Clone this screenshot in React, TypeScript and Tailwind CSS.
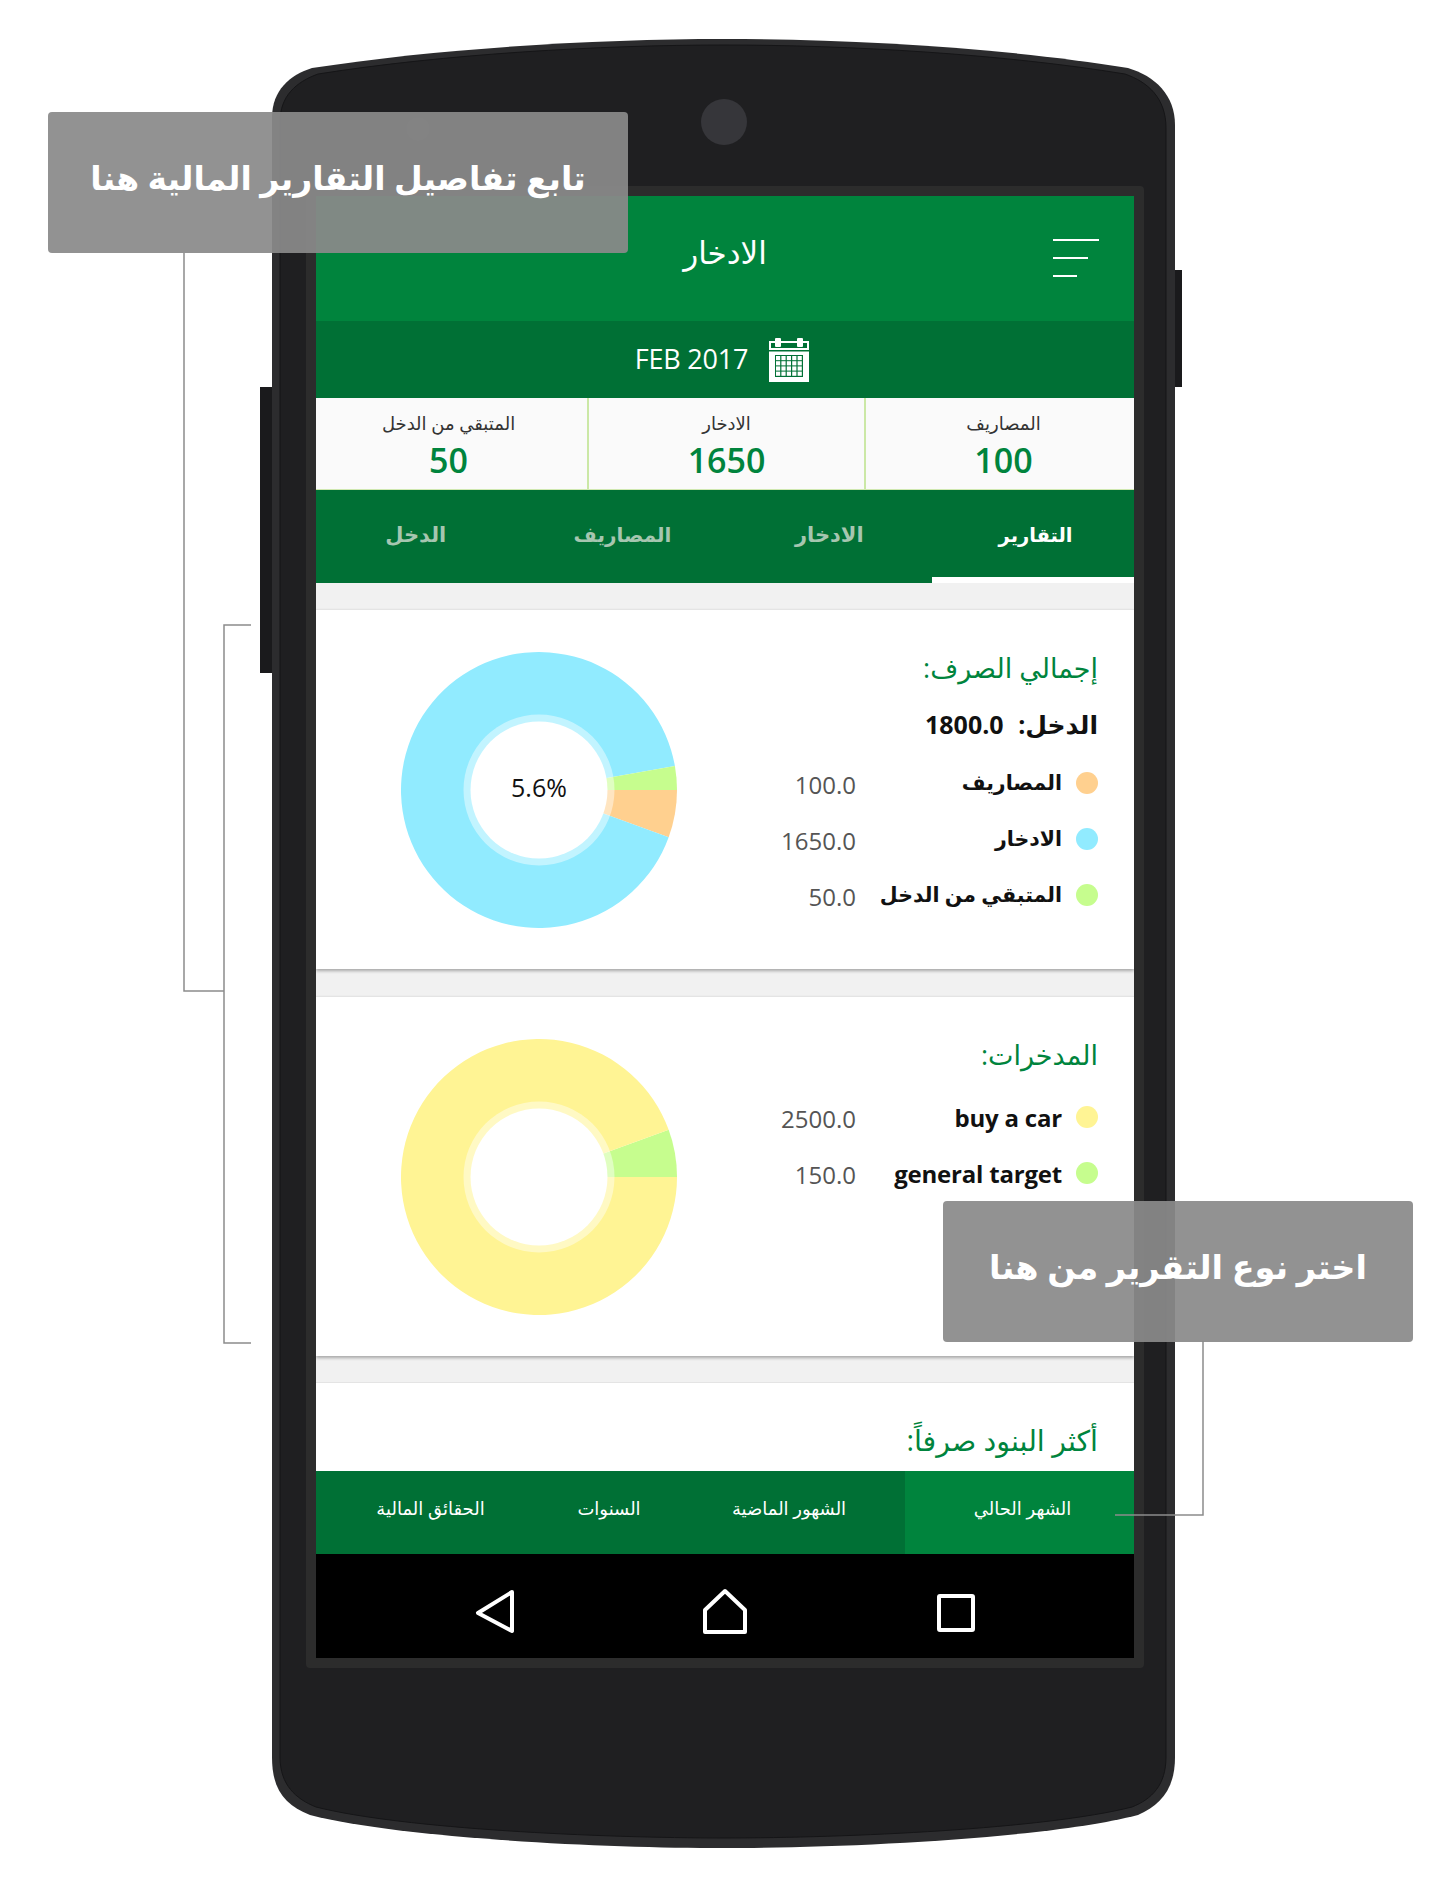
const TABS = [
  { label: 'التقارير', className: 'font-bold text-white text-[19.5px] border-b-[6px] border-white pl-[5px]' },
  { label: 'الادخار', className: 'font-bold text-[#a6c6b0] text-[21px] mb-[6px]' },
  { label: 'المصاريف', className: 'font-bold text-[#a6c6b0] text-[20px] mb-[6px] pr-[3px]' },
  { label: 'الدخل', className: 'font-bold text-[#a6c6b0] text-[21px] mb-[6px] pr-[6px]' },
];

const STATS = [
  { label: 'المصاريف', value: '100', className: 'w-[270px] pl-[7px] border-l-2' },
  { label: 'الادخار', value: '1650', className: 'w-[277px] border-l-2' },
  { label: 'المتبقي من الدخل', value: '50', className: 'flex-1 pr-[6px]' },
];

const PERIODS = [
  { label: 'الشهر الحالي', className: 'w-[229px] bg-[#00843d] pl-[6px]' },
  { label: 'الشهور الماضية', className: 'w-[232px]' },
  { label: 'السنوات', className: 'w-[128px]' },
  { label: 'الحقائق المالية', className: 'flex-1' },
];

type Slice = { from: number; to: number; color: string };

function arc(from: number, to: number) {
  const r = 138;
  const rad = (d: number) => (d * Math.PI) / 180;
  const x1 = 138 + r * Math.cos(rad(from));
  const y1 = 138 + r * Math.sin(rad(from));
  const x2 = 138 + r * Math.cos(rad(to));
  const y2 = 138 + r * Math.sin(rad(to));
  return `M138 138L${x1} ${y1}A${r} ${r} 0 ${to - from > 180 ? 1 : 0} 1 ${x2} ${y2}Z`;
}

function Donut({ slices, label }: { slices: Slice[]; label?: string }) {
  return (
    <div className="relative w-[276px] h-[276px]">
      <svg width="276" height="276" viewBox="0 0 276 276">
        {slices.map((s) => (
          <path key={s.from} d={arc(s.from, s.to)} fill={s.color} />
        ))}
        <circle cx="138" cy="138" r="75.5" fill="#fff" fillOpacity="0.45" />
        <circle cx="138" cy="138" r="68.5" fill="#fff" />
      </svg>
      {label && (
        <div className="absolute inset-0 flex items-center justify-center pb-[4px] text-[25px] text-[#111]">
          {label}
        </div>
      )}
    </div>
  );
}

function LegendRow({ dot, label, value, latin }: { dot: string; label: string; value: string; latin?: boolean }) {
  return (
    <div className="flex items-center h-[56px]" dir="rtl">
      <span className={`w-[22px] h-[22px] rounded-full ${dot}`} />
      <span
        className={`w-[206px] mr-[14px] font-bold text-[#111] leading-none ${
          latin ? 'text-[24px] tracking-[-0.2px] mt-[2px]' : 'text-[20.5px] mb-[2px]'
        }`}
      >
        {label}
      </span>
      <span className="text-[24px] text-[#555] leading-none mt-[4px]">{value}</span>
    </div>
  );
}

function Card({ children }: { children: React.ReactNode }) {
  return (
    <div className="relative h-[360px] bg-white border-t border-[#e4e4e4] shadow-[0_2px_3px_rgba(0,0,0,0.3)] flex justify-between pl-[85px] pr-[36px] pt-[42px]">
      {children}
    </div>
  );
}

function Title({ children, size }: { children: React.ReactNode; size: string }) {
  return (
    <div className={`h-[36px] leading-[31px] text-[#00843d] ${size}`} dir="rtl">
      {children}
    </div>
  );
}

function PhoneShell() {
  return (
    <svg className="absolute left-0 top-0" width="1440" height="1877" viewBox="0 0 1440 1877">
      <rect x="260" y="387" width="14" height="286" fill="#1a1a1c" />
      <rect x="1172" y="270" width="10" height="117" fill="#1a1a1c" />
      <path
        d="M272 118C272 90 290 75 312 68C440 48 600 39 724 39C848 39 1008 48 1128 68C1155 76 1175 95 1175 125L1175 1757C1175 1790 1160 1805 1138 1815C1050 1838 848 1848 724 1848C600 1848 400 1838 310 1815C285 1805 272 1790 272 1757Z"
        fill="#2c2c2e"
      />
      <path
        d="M280 122C280 96 296 82 318 74C445 54 600 45 724 45C848 45 1003 54 1125 74C1148 82 1166 98 1166 128L1166 1757C1166 1785 1152 1799 1132 1807C1045 1829 848 1838 724 1838C600 1838 403 1829 316 1807C296 1799 280 1785 280 1757Z"
        fill="#1f1f21"
        stroke="#151517"
        strokeWidth="1"
      />
      <rect x="306" y="186" width="838" height="1482" rx="4" fill="#2c2c2c" />
      <circle cx="724" cy="122" r="23" fill="#36363a" />
      <circle cx="418" cy="129" r="12" fill="#2a2a2c" />
    </svg>
  );
}

function CalendarIcon() {
  return (
    <svg width="40" height="44" viewBox="0 0 40 44">
      <rect x="0" y="3" width="40" height="41" fill="#fff" />
      <rect x="2" y="5" width="36" height="5" fill="#007035" />
      <rect x="6" y="0" width="6" height="9" rx="1" fill="#fff" />
      <rect x="28" y="0" width="6" height="9" rx="1" fill="#fff" />
      <rect x="0" y="12" width="40" height="1.5" fill="#007035" />
      <rect x="6" y="17" width="28" height="22" fill="#007035" />
      {[0, 1, 2, 3].map((r) =>
        [0, 1, 2, 3, 4].map((c) => (
          <rect key={`${r}-${c}`} x={7 + c * 5.4} y={18 + r * 5.2} width="4.2" height="4.2" fill="#fff" />
        )),
      )}
    </svg>
  );
}

function Callout({ className, text }: { className: string; text: string }) {
  return (
    <div
      className={`absolute z-20 flex justify-center rounded-[4px] bg-[rgba(138,138,138,0.93)] text-white font-bold leading-[50px] ${className}`}
      dir="rtl"
    >
      {text}
    </div>
  );
}

export default function App() {
  return (
    <div className="relative w-[1440px] h-[1877px] bg-white overflow-hidden pl-[316px] pt-[196px] font-['Open_Sans','DejaVu_Sans',sans-serif]">
      <PhoneShell />

      <div className="relative w-[818px] flex flex-col h-[1462px] bg-[#f1f1f1] overflow-hidden">
        {/* Header */}
        <div className="relative h-[125px] shrink-0 bg-[#00843d] flex justify-center pt-[33px] text-[31px] leading-[46px] text-white" dir="rtl">
          الادخار
          <div className="absolute right-[35px] top-[43px] flex flex-col items-end gap-[16px]">
            <span className="block w-[46px] h-[2px] bg-white" />
            <span className="block w-[35px] h-[2px] bg-white" />
            <span className="block w-[24px] h-[2px] bg-white" />
          </div>
        </div>

        {/* Month */}
        <div className="h-[77px] shrink-0 bg-[#007035] flex items-center justify-center gap-[21px] pr-[6px] text-white text-[27px]">
          <span className="tracking-[-0.2px]">FEB 2017</span>
          <CalendarIcon />
        </div>

        {/* Totals */}
        <div className="h-[92px] shrink-0 bg-[#fafafa] flex border-b border-[#cfe8b0]" dir="rtl">
          {STATS.map((s) => (
            <div key={s.label} className={`${s.className} flex flex-col items-center pt-[11px] border-[#cbe8a6]`}>
              <span className="text-[18px] leading-[28px] text-[#333]">{s.label}</span>
              <span className="text-[34px] leading-[46px] font-semibold text-[#00843d]">{s.value}</span>
            </div>
          ))}
        </div>

        {/* Tabs */}
        <div className="h-[93px] shrink-0 bg-[#007035] grid grid-cols-[202px_1fr_1fr_1fr]" dir="rtl">
          {TABS.map((t) => (
            <div key={t.label} className={`flex items-center justify-center pt-[2px] ${t.className}`}>
              {t.label}
            </div>
          ))}
        </div>

        <div className="h-[26px] shrink-0" />

        <Card>
          <Donut
            label="5.6%"
            slices={[
              { from: 0, to: 20, color: '#ffd08f' },
              { from: 20, to: 350, color: '#91ebff' },
              { from: 350, to: 360, color: '#c6fd8e' },
            ]}
          />
          <div className="w-[446px]">
            <Title size="text-[27px]">إجمالي الصرف:</Title>
            <div className="mt-[21px] h-[32px] leading-[30px] text-[25px] font-bold text-[#111]" dir="rtl">
              الدخل: <span className="mr-[8px]">1800.0</span>
            </div>
            <div className="mt-[14px]">
              <LegendRow dot="bg-[#ffd08f]" label="المصاريف" value="100.0" />
              <LegendRow dot="bg-[#91ebff]" label="الادخار" value="1650.0" />
              <LegendRow dot="bg-[#c6fd8e]" label="المتبقي من الدخل" value="50.0" />
            </div>
          </div>
        </Card>

        <div className="h-[27px] shrink-0" />

        <Card>
          <Donut
            slices={[
              { from: -20, to: 0, color: '#c6fd8e' },
              { from: 0, to: 340, color: '#fff494' },
            ]}
          />
          <div className="w-[446px]">
            <Title size="text-[27px]">المدخرات:</Title>
            <div className="mt-[14px]">
              <LegendRow latin dot="bg-[#fff494]" label="buy a car" value="2500.0" />
              <LegendRow latin dot="bg-[#c6fd8e]" label="general target" value="150.0" />
            </div>
          </div>
        </Card>

        <div className="h-[26px] shrink-0" />

        <div className="h-[89px] shrink-0 bg-white border-t border-[#e4e4e4] pt-[42px] pr-[36px]">
          <Title size="text-[28.5px]">أكثر البنود صرفاً:</Title>
        </div>

        {/* Period switch */}
        <div className="h-[83px] shrink-0 bg-[#007035] flex text-[18px] text-white" dir="rtl">
          {PERIODS.map((p) => (
            <div key={p.label} className={`${p.className} flex items-center justify-center pb-[8px]`}>
              {p.label}
            </div>
          ))}
        </div>

        {/* Android nav */}
        <div className="h-[104px] shrink-0 bg-black flex items-center">
          <svg width="818" height="104" viewBox="0 0 818 104" fill="none" stroke="#fff" strokeWidth="4" strokeLinejoin="round">
            <path d="M196 38L162 59L196 77Z" />
            <path d="M389 56L409 37L429 56V78H389Z" />
            <rect x="623" y="42" width="34" height="34" rx="1" />
          </svg>
        </div>
      </div>

      {/* Callouts and connectors */}
      <svg className="absolute left-0 top-0 z-10" width="1440" height="1877" viewBox="0 0 1440 1877" fill="none" stroke="#8c8c8c" strokeWidth="1.5">
        <path d="M184 253V991H224" />
        <path d="M251 625H224V1343H251" />
        <path d="M1115 1515H1203V1341" />
      </svg>
      <Callout className="left-[48px] top-[112px] w-[580px] h-[141px] pt-[41px] text-[33px]" text="تابع تفاصيل التقارير المالية هنا" />
      <Callout className="left-[943px] top-[1201px] w-[470px] h-[141px] pt-[40px] text-[33.5px]" text="اختر نوع التقرير من هنا" />
    </div>
  );
}
